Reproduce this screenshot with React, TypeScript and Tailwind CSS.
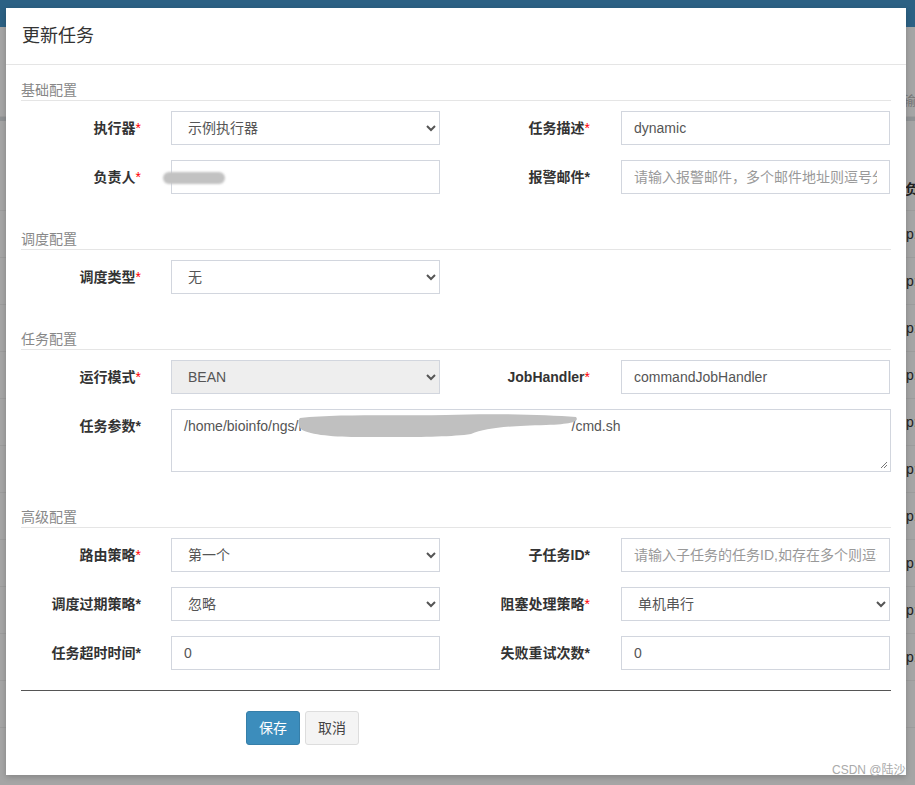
import type { ReactNode } from 'react';

const FONT = 'font-[Liberation_Sans,Noto_Sans_CJK_SC,sans-serif]';

function Label({ text, red = true, wide = false, top = false }: { text: string; red?: boolean; wide?: boolean; top?: boolean }) {
  return (
    <div
      className={`${wide ? 'w-[150px]' : 'w-[120px]'} shrink-0 text-right text-[14px] font-bold leading-[20px] text-[#333] ${top ? 'pt-[7px]' : ''}`}
    >
      {text}
      <span className={red ? 'font-normal text-[#ff0000]' : 'text-[#333]'}>*</span>
    </div>
  );
}

function Input({ value, placeholder }: { value?: string; placeholder?: string }) {
  return (
    <input
      readOnly
      value={value ?? ''}
      placeholder={placeholder}
      className="h-[34px] w-full border border-[#d2d6de] bg-white px-[12px] text-[14px] text-[#555] outline-none placeholder:text-[#999]"
    />
  );
}

function Select({ value, disabled = false }: { value: string; disabled?: boolean }) {
  return (
    <select
      disabled={disabled}
      defaultValue={value}
      className={`h-[34px] w-full border border-[#d2d6de] px-[12px] text-[14px] text-[#555] outline-none ${
        disabled ? 'bg-[#eeeeee]' : 'bg-white'
      }`}
    >
      <option value={value}>{value}</option>
    </select>
  );
}

function Cell({ children, left = false }: { children: ReactNode; left?: boolean }) {
  return <div className={`${left ? 'ml-[30px]' : 'ml-[31px]'} w-[269px] shrink-0`}>{children}</div>;
}

function Section({ title, first = false, children }: { title: string; first?: boolean; children: ReactNode }) {
  return (
    <div className={first ? '' : 'mt-[35px]'}>
      <div className="mb-[10px] border-b border-[#e5e5e5] text-[14px] leading-[20px] text-[#888]">{title}</div>
      <div className="flex flex-col gap-[15px]">{children}</div>
    </div>
  );
}

function Blob({ className }: { className: string }) {
  return <span className={`absolute rounded-full bg-[#c2c2c2] blur-[1px] ${className}`} />;
}

export default function App() {
  const bgRows = Array.from({ length: 11 });

  return (
    <div className={`relative h-[785px] w-full overflow-hidden bg-[#a5a5a5] ${FONT}`}>
      {/* page behind the modal */}
      <div className="h-[27px] bg-[#2c6184]" />
      <div className="flex h-[90px] items-end justify-end border-b border-[#9c9c9c] pb-[6px]">
        <span className="w-[12px] overflow-hidden whitespace-nowrap text-[13px] text-[#777]">输入</span>
      </div>
      <div className="h-[4px] bg-[#8f9294]" />
      <div className="flex h-[90px] items-end justify-end border-b border-[#9c9c9c] pb-[10px]">
        <span className="w-[10px] overflow-hidden whitespace-nowrap text-[14px] font-bold text-[#222]">负责</span>
      </div>
      {bgRows.map((_, i) => (
        <div key={i} className="flex h-[47px] items-center justify-end border-b border-[#9c9c9c]">
          <span className="w-[9px] overflow-hidden whitespace-nowrap text-[14px] text-[#222]">{i < 10 ? 'p:' : ''}</span>
        </div>
      ))}

      {/* modal */}
      <div className="absolute left-[6px] top-[8px] w-[900px] bg-white shadow-[0_2px_6px_rgba(0,0,0,0.2)]">
        <div className="border-b border-[#e5e5e5] px-[16px] py-[15px]">
          <h4 className="text-[18px] leading-[26px] text-[#333]">更新任务</h4>
        </div>

        <div className="px-[15px] pb-[30px] pt-[15px]">
          <Section title="基础配置" first>
            <div className="flex items-center">
              <Label text="执行器" />
              <Cell left>
                <Select value="示例执行器" />
              </Cell>
              <Label text="任务描述" wide />
              <Cell>
                <Input value="dynamic" />
              </Cell>
            </div>
            <div className="flex items-center">
              <Label text="负责人" />
              <Cell left>
                <div className="relative">
                  <Input value="" />
                  <Blob className="left-[-8px] top-[12px] h-[12px] w-[62px]" />
                </div>
              </Cell>
              <Label text="报警邮件" wide red={false} />
              <Cell>
                <Input placeholder="请输入报警邮件，多个邮件地址则逗号分隔" />
              </Cell>
            </div>
          </Section>

          <Section title="调度配置">
            <div className="flex items-center">
              <Label text="调度类型" />
              <Cell left>
                <Select value="无" />
              </Cell>
            </div>
          </Section>

          <Section title="任务配置">
            <div className="flex items-center">
              <Label text="运行模式" />
              <Cell left>
                <Select value="BEAN" disabled />
              </Cell>
              <Label text="JobHandler" wide />
              <Cell>
                <Input value="commandJobHandler" />
              </Cell>
            </div>
            <div className="flex items-start">
              <Label text="任务参数" red={false} top />
              <div className="relative ml-[30px] h-[63px] w-[720px] shrink-0 border border-[#d2d6de] bg-white px-[12px] py-[6px] text-[14px] leading-[20px] text-[#555]">
                <span>/home/bioinfo/ngs/l</span>
                <span className="relative inline-block h-[20px] w-[270px] align-top">
                  <svg className="absolute left-[-6px] top-[-4px]" width="285" height="30" viewBox="0 0 285 30">
                    <path
                      d="M4 6 C40 2 90 4 150 3 C200 1 250 3 280 5 C283 9 279 12 250 13 C210 14 190 16 175 22 C150 26 90 25 60 25 C35 25 10 22 5 17 C2 13 2 8 4 6 Z"
                      fill="#c0c0c0"
                    />
                  </svg>
                </span>
                <span>/cmd.sh</span>
                <svg className="absolute bottom-[2px] right-[2px]" width="9" height="9" viewBox="0 0 9 9">
                  <path d="M8 2 L2 8 M8 5 L5 8" stroke="#777" strokeWidth="1" />
                </svg>
              </div>
            </div>
          </Section>

          <Section title="高级配置">
            <div className="flex items-center">
              <Label text="路由策略" />
              <Cell left>
                <Select value="第一个" />
              </Cell>
              <Label text="子任务ID" wide red={false} />
              <Cell>
                <Input placeholder="请输入子任务的任务ID,如存在多个则逗号分隔" />
              </Cell>
            </div>
            <div className="flex items-center">
              <Label text="调度过期策略" red={false} />
              <Cell left>
                <Select value="忽略" />
              </Cell>
              <Label text="阻塞处理策略" wide />
              <Cell>
                <Select value="单机串行" />
              </Cell>
            </div>
            <div className="flex items-center">
              <Label text="任务超时时间" red={false} />
              <Cell left>
                <Input value="0" />
              </Cell>
              <Label text="失败重试次数" wide red={false} />
              <Cell>
                <Input value="0" />
              </Cell>
            </div>
          </Section>

          <hr className="mt-[20px] border-t border-[#555]" />

          <div className="mt-[20px] flex gap-[5px] pl-[225px]">
            <button className="h-[34px] w-[54px] rounded-[3px] border border-[#367fa9] bg-[#3c8dbc] text-[14px] text-white">
              保存
            </button>
            <button className="h-[34px] w-[54px] rounded-[3px] border border-[#ddd] bg-[#f4f4f4] text-[14px] text-[#444]">
              取消
            </button>
          </div>
        </div>
      </div>

      <div className="absolute left-[832px] top-[761px] text-[12px] text-[#aaa]">CSDN @陆沙</div>
    </div>
  );
}
